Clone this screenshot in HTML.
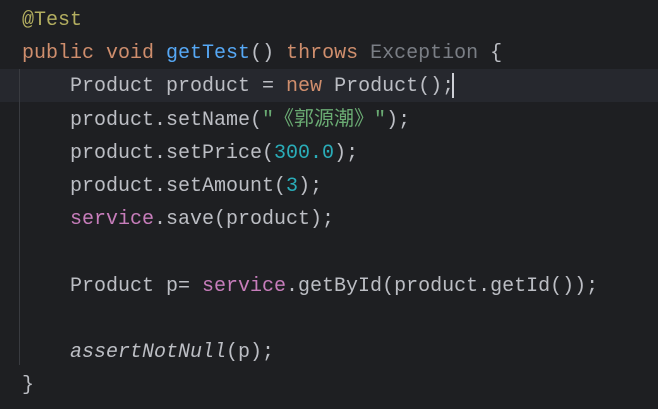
<!DOCTYPE html>
<html><head><meta charset="utf-8"><style>
html,body{margin:0;padding:0;background:#1e1f22;width:658px;height:409px;overflow:hidden}
.code{position:absolute;left:22px;top:4px;font-family:"Liberation Mono","Noto Sans CJK SC",monospace;font-size:20px;line-height:33.2px;color:#bcbec4;white-space:pre}
.hl{position:absolute;left:0;top:69px;width:658px;height:33px;background:#26282e}
.guide{position:absolute;left:19px;top:69px;width:1px;height:296px;background:#393b40}
.cur{position:absolute;left:452px;top:73px;width:2px;height:25px;background:#ced0d6}
.an{color:#b3ae60}.kw{color:#cf8e6d}.fn{color:#56a8f5}.gr{color:#7a7e85}.st{color:#6aab73}.nm{color:#2aacb8}.fd{color:#c77dbb}.it{font-style:italic}
</style></head><body>
<div class="hl"></div><div class="guide"></div>
<div class="code"><span class="an">@Test</span>
<span class="kw">public void</span> <span class="fn">getTest</span>() <span class="kw">throws</span> <span class="gr">Exception</span> {
    Product product = <span class="kw">new</span> Product();
    product.setName(<span class="st">"《郭源潮》"</span>);
    product.setPrice(<span class="nm">300.0</span>);
    product.setAmount(<span class="nm">3</span>);
    <span class="fd">service</span>.save(product);

    Product p= <span class="fd">service</span>.getById(product.getId());

    <span class="it">assertNotNull</span>(p);
}</div>
<div class="cur"></div>
</body></html>
